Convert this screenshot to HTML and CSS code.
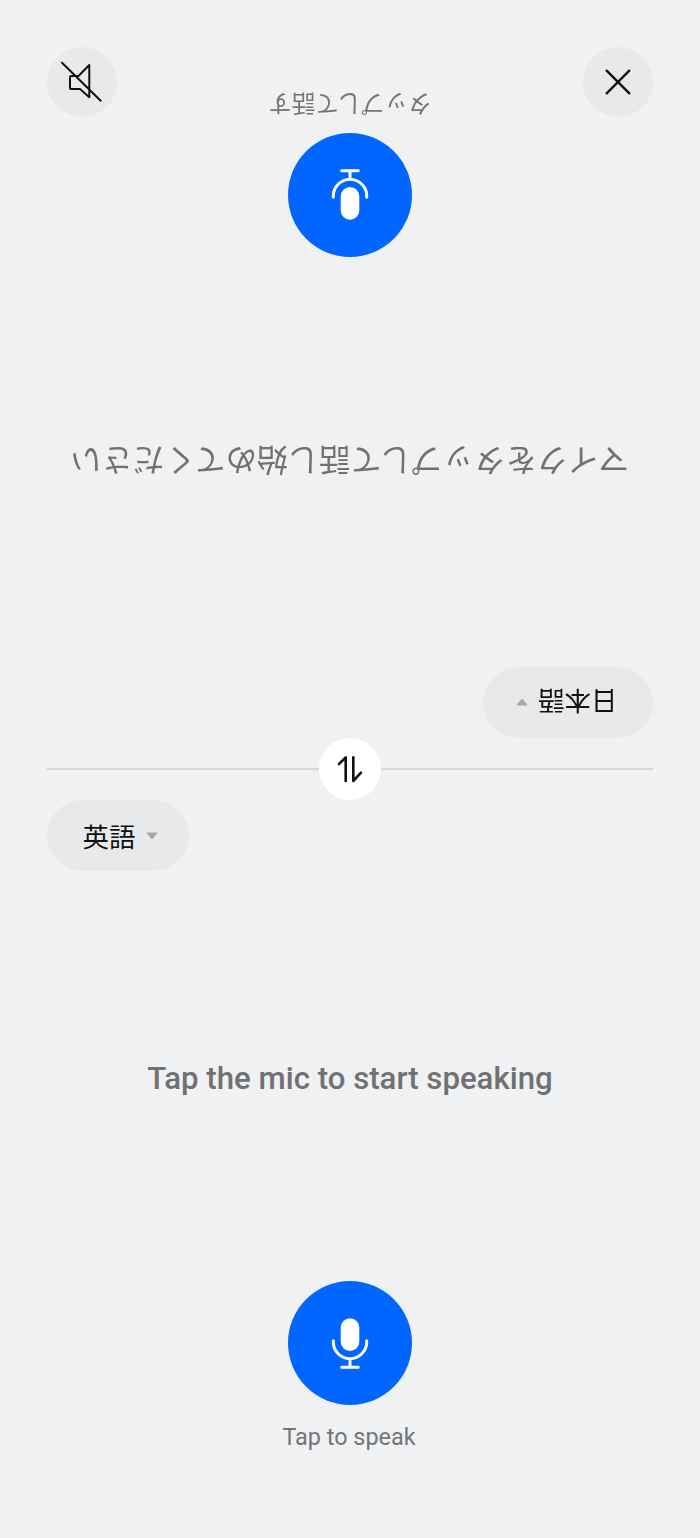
FILE: index.html
```html
<!DOCTYPE html>
<html lang="ja">
<head>
<meta charset="utf-8">
<title>Voice translate</title>
<link rel="stylesheet" href="styles.css">
</head>
<body>
<main class="screen">
  <section class="panel panel-flipped">
    <button class="lang-pill"><span class="lang-name">日本語</span><svg class="caret" viewBox="0 0 12 8"><path d="M1 1h10L6 7z" /></svg></button>
    <div class="stage"><p class="prompt prompt-ja">マイクをタップして話し始めてください</p></div>
    <button class="mic-button"><svg class="mic-icon" viewBox="0 0 40 51"><rect x="10.7" y="0.3" width="18.6" height="32.7" rx="9.3" class="mic-body"/><path d="M3.3 22.7v1.3a16.7 16.7 0 0 0 33.4 0v-1.3M20 41v8.3M11.7 49.3h16.6" class="mic-line"/></svg></button>
    <p class="mic-label">タップして話す</p>
  </section>
  <div class="divider"></div>
  <section class="panel">
    <button class="lang-pill"><span class="lang-name">英語</span><svg class="caret" viewBox="0 0 12 8"><path d="M1 1h10L6 7z" /></svg></button>
    <div class="stage"><p class="prompt prompt-en">Tap the mic to start speaking</p></div>
    <button class="mic-button"><svg class="mic-icon" viewBox="0 0 40 51"><rect x="10.7" y="0.3" width="18.6" height="32.7" rx="9.3" class="mic-body"/><path d="M3.3 22.7v1.3a16.7 16.7 0 0 0 33.4 0v-1.3M20 41v8.3M11.7 49.3h16.6" class="mic-line"/></svg></button>
    <p class="mic-label mic-label-en">Tap to speak</p>
  </section>

  <div class="top-actions">
    <button class="round-button"><svg class="action-icon icon-mute" viewBox="0 0 70 70"><path d="M42.3 18 31.500 29H24q-1 0-1 1v11q0 1 1 1h9l9.300 8.300zM15 15.700 53.700 53.700"/></svg></button>
    <button class="round-button"><svg class="action-icon" viewBox="0 0 70 70"><path d="M23.700 23.700 46.300 46.300M46.300 23.700 23.700 46.300"/></svg></button>
  </div>
  <button class="swap-button"><svg class="swap-icon" viewBox="0 0 62 62"><path d="M26.700 43V19.300L20 26M34.300 19.300V43L42 34.700"/></svg></button>
</main>
</body>
</html>
```
FILE: styles.css
```css
* {
  box-sizing: border-box;
}

html,
body {
  margin: 0;
  padding: 0;
  background: #f0f1f3;
}

body {
  font-family: Roboto, "Noto Sans CJK JP", sans-serif;
}

button {
  border: 0;
  padding: 0;
  font: inherit;
  cursor: pointer;
}

p {
  margin: 0;
}

.screen {
  position: relative;
  display: flex;
  flex-direction: column;
  width: 700px;
  height: 1538px;
  overflow: hidden;
  background: #f0f1f3;
}

.panel {
  display: flex;
  flex: 1 1 0;
  flex-direction: column;
  align-items: center;
  padding: 30px 47px 0;
}

.panel-flipped {
  transform: rotate(180deg);
}

.divider {
  flex: 0 0 2px;
  margin: 0 47px;
  background: #d6d7d9;
}

.lang-pill {
  display: flex;
  align-items: center;
  align-self: flex-start;
  gap: 10px;
  height: 71px;
  padding: 0 31px 0 35.500px;
  border-radius: 36px;
  background: #e8e9eb;
  color: #111;
}

.panel-flipped .lang-pill {
  padding-right: 33px;
}

.lang-name {
  font-family: "Noto Sans CJK JP", sans-serif;
  font-size: 26.500px;
  line-height: 36px;
}

.caret {
  width: 12px;
  height: 8px;
}

.caret path {
  fill: #a6a7a9;
  stroke: #a6a7a9;
  stroke-width: 1;
  stroke-linejoin: round;
}

.stage {
  display: flex;
  flex: 1;
  align-items: center;
  justify-content: center;
  align-self: stretch;
}

.prompt {
  font-size: 31.200px;
  font-weight: 500;
  line-height: 40px;
  color: #707173;
  white-space: nowrap;
}

.prompt-en {
  margin-top: 5px;
}

.prompt-ja {
  font-family: "Noto Sans CJK JP", sans-serif;
  font-weight: 400;
}

.mic-button {
  display: flex;
  flex: 0 0 124px;
  align-items: center;
  justify-content: center;
  width: 124px;
  height: 124px;
  border-radius: 50%;
  background: #0066ff;
}

.mic-icon {
  width: 40px;
  height: 51px;
}

.mic-body {
  fill: #fff;
}

.mic-line {
  fill: none;
  stroke: #fff;
  stroke-width: 3;
  stroke-linecap: round;
}

.mic-label {
  margin: 17px 0 86px;
  font-size: 23.400px;
  line-height: 30px;
  color: #747577;
}

.mic-label-en {
  padding-right: 2px;
}

.panel-flipped .mic-label {
  margin: 13px 0 90px;
  font-family: "Noto Sans CJK JP", sans-serif;
}

.top-actions {
  position: absolute;
  top: 47px;
  right: 47px;
  left: 47px;
  display: flex;
  justify-content: space-between;
}

.round-button {
  display: flex;
  width: 70px;
  height: 70px;
  border-radius: 50%;
  background: #e8e9eb;
}

.action-icon {
  width: 70px;
  height: 70px;
  fill: none;
  stroke: #111;
  stroke-width: 2.400;
  stroke-linecap: round;
  stroke-linejoin: round;
}

.icon-mute {
  stroke-width: 2;
}

.swap-button {
  position: absolute;
  top: 738px;
  left: 319px;
  display: flex;
  width: 62px;
  height: 62px;
  border-radius: 50%;
  background: #fff;
}

.swap-icon {
  width: 62px;
  height: 62px;
  fill: none;
  stroke: #111;
  stroke-width: 2.600;
  stroke-linecap: round;
  stroke-linejoin: round;
}
```
